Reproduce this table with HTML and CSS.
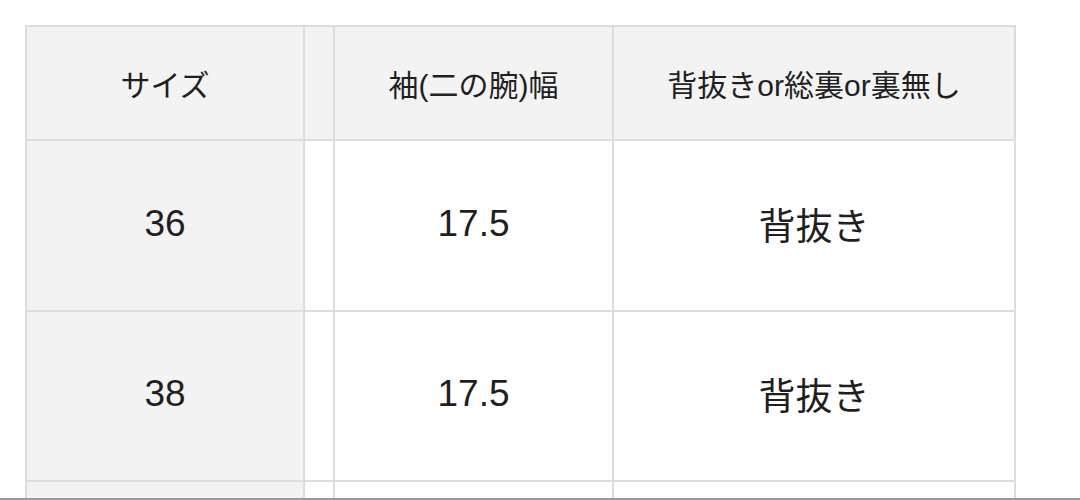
FILE: index.html
```html
<!DOCTYPE html>
<html lang="ja">
<head>
<meta charset="utf-8">
<link rel="stylesheet" href="styles.css">
</head>
<body>
<table class="size-table">
  <tr class="head">
    <td class="c1">サイズ</td>
    <td class="c2"></td>
    <td class="c3">袖(二の腕)幅</td>
    <td class="c4">背抜きor総裏or裏無し</td>
  </tr>
  <tr class="row r1">
    <td class="c1">36</td>
    <td class="c2"></td>
    <td class="c3">17.5</td>
    <td class="c4">背抜き</td>
  </tr>
  <tr class="row r2">
    <td class="c1">38</td>
    <td class="c2"></td>
    <td class="c3">17.5</td>
    <td class="c4">背抜き</td>
  </tr>
  <tr class="row r3">
    <td class="c1"></td>
    <td class="c2"></td>
    <td class="c3"></td>
    <td class="c4"></td>
  </tr>
</table>
<div class="bottom-edge"></div>
</body>
</html>
```
FILE: styles.css
```css
html, body {
  margin: 0;
  padding: 0;
  background: #ffffff;
  height: 500px;
  overflow: hidden;
}
body {
  font-family: "Liberation Sans", "Noto Sans CJK JP", sans-serif;
  color: #1f1f1f;
}
.size-table {
  margin: 25px 0 0 25px;
  border-collapse: separate;
  border-spacing: 0;
  border-left: 2px solid #dbdde3;
  border-top: 2px solid #dbdde3;
  table-layout: fixed;
}
.size-table td {
  padding: 0;
  border-right: 2px solid #dbdde3;
  border-bottom: 2px solid #dbdde3;
  text-align: center;
  vertical-align: middle;
  box-sizing: content-box;
}
.c1 { width: 276px; }
.c2 { width: 28px; }
.c3 { width: 277px; }
.c4 { width: 400px; }
.head td {
  height: 112px;
  background: #f3f3f4;
  font-size: 30px;
}
.row td {
  font-size: 37px;
  background: #ffffff;
  padding-bottom: 4px;
  box-sizing: border-box;
}
.row td.c1 { background: #f3f3f4; }
.r1 td { height: 171px; }
.r2 td { height: 170px; }
.r3 td { height: 16px; border-bottom: 0; }
.bottom-edge {
  position: fixed;
  left: 0;
  right: 0;
  bottom: 0;
  height: 2px;
  background: #9a9a9a;
}
```
